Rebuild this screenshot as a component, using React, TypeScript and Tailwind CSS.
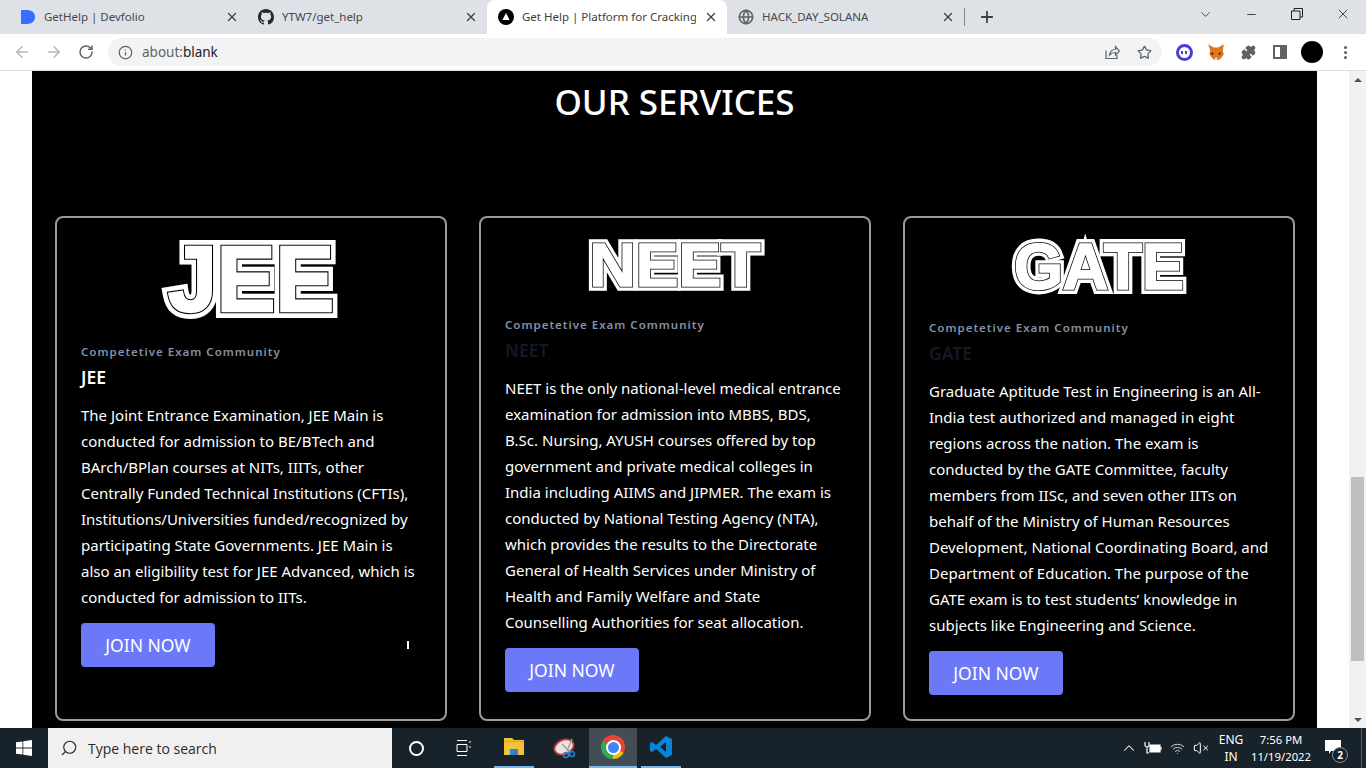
import type { ReactNode } from 'react';
import { ArrowLeft, ArrowRight, RotateCw, Info, Star, Puzzle, X, Plus, ChevronDown, Minus, Globe, EllipsisVertical, Search, ChevronUp, Wifi, VolumeX } from 'lucide-react';

const cards = [
  {
    logo: 'JEE',
    logoH: 80,
    logoClass: 'h-[80px]',
    titleClass: 'text-white',
    lines: [
      'The Joint Entrance Examination, JEE Main is',
      'conducted for admission to BE/BTech and',
      'BArch/BPlan courses at NITs, IIITs, other',
      'Centrally Funded Technical Institutions (CFTIs),',
      'Institutions/Universities funded/recognized by',
      'participating State Governments. JEE Main is',
      'also an eligibility test for JEE Advanced, which is',
      'conducted for admission to IITs.',
    ],
  },
  {
    logo: 'NEET',
    logoH: 53,
    logoClass: 'h-[53px]',
    titleClass: 'text-[#141a24]',
    lines: [
      'NEET is the only national-level medical entrance',
      'examination for admission into MBBS, BDS,',
      'B.Sc. Nursing, AYUSH courses offered by top',
      'government and private medical colleges in',
      'India including AIIMS and JIPMER. The exam is',
      'conducted by National Testing Agency (NTA),',
      'which provides the results to the Directorate',
      'General of Health Services under Ministry of',
      'Health and Family Welfare and State',
      'Counselling Authorities for seat allocation.',
    ],
  },
  {
    logo: 'GATE',
    logoH: 56,
    logoClass: 'h-[56px]',
    titleClass: 'text-[#141a24]',
    lines: [
      'Graduate Aptitude Test in Engineering is an All-',
      'India test authorized and managed in eight',
      'regions across the nation. The exam is',
      'conducted by the GATE Committee, faculty',
      'members from IISc, and seven other IITs on',
      'behalf of the Ministry of Human Resources',
      'Development, National Coordinating Board, and',
      'Department of Education. The purpose of the',
      'GATE exam is to test students’ knowledge in',
      'subjects like Engineering and Science.',
    ],
  },
];

// striped logo: same live text stacked with white / black / white strokes
function StripedLogo({ text, h, className }: { text: string; h: number; className: string }) {
  const w = 180;
  const k = h / 80;
  const outer = 14 * k;
  const layers = [
    { stroke: '#fff', width: outer },
    { stroke: '#000', width: 4.6 * k },
    { stroke: '#fff', width: 2.4 * k },
  ];
  return (
    <svg viewBox={`0 0 ${w} ${h}`} width={w} className={`${className} block mx-auto overflow-visible`}>
      {layers.map((l, i) => (
        <text
          key={i}
          x={outer / 2}
          y={h - outer / 2}
          textLength={w - outer}
          lengthAdjust="spacingAndGlyphs"
          fontFamily="'Liberation Sans', sans-serif"
          fontWeight="700"
          fontSize={(h - outer) / 0.716}
          fill="#fff"
          stroke={l.stroke}
          strokeWidth={l.width}
          strokeLinejoin="miter"
        >
          {text}
        </text>
      ))}
    </svg>
  );
}

function Tab({ title, active, icon, className }: { title: string; active?: boolean; icon: ReactNode; className: string }) {
  return (
    <div className={`${className} h-[34px] shrink-0 flex items-center gap-[8px] pr-[9px] text-[11.500px] ${active ? 'bg-white rounded-t-[8px] text-[#3c4043]' : 'text-[#45494e]'}`}>
      <span className="w-[16px] h-[16px] shrink-0 flex items-center justify-center">{icon}</span>
      <span className="flex-1 overflow-hidden whitespace-nowrap">{title}</span>
      <X size={14} strokeWidth={2.2} className="shrink-0 text-[#3c4043]" />
    </div>
  );
}

function ToolBox({ children }: { children: ReactNode }) {
  return <div className="w-[32px] h-[32px] shrink-0 flex items-center justify-center">{children}</div>;
}

function Chrome() {
  return (
    <div className="shrink-0 h-[71px] bg-white border-b border-[#dadce0]">
      <div className="h-[34px] bg-[#dee1e6] flex">
        <Tab
          className="w-[248px] pl-[20px]"
          title="GetHelp | Devfolio"
          icon={
            <svg viewBox="0 0 16 16" className="w-[16px] h-[16px]">
              <path d="M1 1h6c5 0 8 3 8 7s-3 7-8 7H1z" fill="#3770ff" />
            </svg>
          }
        />
        <Tab
          className="w-[239px] pl-[10px]"
          title="YTW7/get_help"
          icon={
            <svg viewBox="0 0 16 16" className="w-[16px] h-[16px]" fill="#24292f">
              <path d="M8 0C3.580 0 0 3.580 0 8c0 3.540 2.290 6.530 5.470 7.590.4.070.55-.17.55-.38 0-.19-.01-.82-.01-1.490-2.010.37-2.530-.49-2.690-.94-.09-.23-.48-.94-.82-1.130-.28-.15-.68-.52-.01-.53.63-.01 1.080.58 1.230.82.72 1.210 1.870.87 2.330.66.07-.52.28-.87.51-1.070-1.780-.2-3.640-.89-3.640-3.950 0-.87.31-1.590.82-2.150-.08-.2-.36-1.020.08-2.120 0 0 .67-.21 2.200.82.64-.18 1.320-.27 2-.27s1.360.09 2 .27c1.530-1.040 2.200-.82 2.200-.82.44 1.100.16 1.920.08 2.120.51.56.82 1.270.82 2.150 0 3.070-1.870 3.750-3.650 3.950.29.25.54.73.54 1.480 0 1.070-.01 1.930-.01 2.200 0 .21.15.46.55.38A8.010 8.010 0 0 0 16 8c0-4.420-3.580-8-8-8z" />
            </svg>
          }
        />
        <Tab
          active
          className="w-[240px] pl-[11px]"
          title="Get Help | Platform for Cracking"
          icon={
            <svg viewBox="0 0 16 16" className="w-[16px] h-[16px]">
              <circle cx="8" cy="8" r="8" fill="#000" />
              <path d="M8 4l3.600 7H4.400z" fill="#fff" />
            </svg>
          }
        />
        <Tab className="w-[237px] pl-[11px]" title="HACK_DAY_SOLANA" icon={<Globe size={16} strokeWidth={2.4} className="text-[#5f6368]" />} />
        <div className="w-px h-[18px] mt-[8px] bg-[#80868b]" />
        <div className="w-[44px] h-[34px] flex items-center justify-center">
          <Plus size={18} strokeWidth={2.4} className="text-[#3c4043]" />
        </div>
        <div className="ml-auto flex h-[28px]">
          <div className="w-[46px] flex items-center justify-center">
            <ChevronDown size={15} strokeWidth={1.5} className="text-[#3c4043]" />
          </div>
          <div className="w-[46px] flex items-center justify-center">
            <Minus size={13} strokeWidth={1.5} className="text-[#202124]" />
          </div>
          <div className="w-[46px] flex items-center justify-center">
            <svg viewBox="0 0 12 12" className="w-[12px] h-[12px]" fill="none" stroke="#202124">
              <path d="M3 3V.5h8.500V9H9M.5 3h8.500v8.500H.5z" />
            </svg>
          </div>
          <div className="w-[46px] flex items-center justify-center">
            <X size={16} strokeWidth={1.2} className="text-[#202124]" />
          </div>
        </div>
      </div>
      <div className="h-[36px] flex items-center pl-[6px]">
        <ToolBox>
          <ArrowLeft size={18} className="text-[#b4b7bb]" />
        </ToolBox>
        <ToolBox>
          <ArrowRight size={18} className="text-[#b4b7bb]" />
        </ToolBox>
        <ToolBox>
          <RotateCw size={16} strokeWidth={2.2} className="text-[#5f6368]" />
        </ToolBox>
        <div className="ml-[6px] w-[1054px] h-[28px] rounded-full bg-[#f1f3f4] flex items-center pl-[10px] text-[13.500px]">
          <Info size={15} strokeWidth={2} className="text-[#5f6368] mr-[9px]" />
          <span className="text-[#5f6368]">about:</span>
          <span className="text-[#202124]">blank</span>
          <div className="ml-auto flex items-center">
            <ToolBox>
              <svg viewBox="0 0 16 16" className="w-[16px] h-[16px]" fill="none" stroke="#5f6368" strokeWidth="1.200">
                <path d="M2 6.500V14.500h11V11" />
                <path d="M5.500 11c.5-3.500 3-5.500 6-5.500V2.500l4 4.500-4 4V8.500c-2.500 0-4.500.7-6 2.500z" />
              </svg>
            </ToolBox>
            <ToolBox>
              <Star size={15} strokeWidth={2} className="text-[#5f6368]" />
            </ToolBox>
            <div className="w-[2px]" />
          </div>
        </div>
        <div className="ml-[6px] flex items-center">
          <ToolBox>
            <div className="w-[17px] h-[17px] rounded-full bg-[#4a3dd9] flex items-center justify-center">
              <div className="w-[11px] h-[11px] rounded-full bg-white flex items-center justify-center gap-[2px]">
                <span className="w-[2px] h-[3px] bg-[#4a3dd9]" />
                <span className="w-[2px] h-[3px] bg-[#4a3dd9]" />
              </div>
            </div>
          </ToolBox>
          <ToolBox>
            <svg viewBox="0 0 16 16" className="w-[18px] h-[18px]">
              <path d="M1 1l5 3h4l5-3-1 6 1 3-3 4-2 1H7l-2-1-3-4 1-3z" fill="#e2761b" />
              <path d="M3 8l3 1-1 2zM13 8l-3 1 1 2z" fill="#233447" />
              <path d="M7 13h2v2H7z" fill="#f5e5d5" />
            </svg>
          </ToolBox>
          <ToolBox>
            <Puzzle size={15} fill="#5f6368" className="text-[#5f6368]" />
          </ToolBox>
          <ToolBox>
            <div className="w-[14px] h-[14px] border-2 border-[#5f6368] flex justify-end">
              <div className="w-[5px] h-full bg-[#5f6368]" />
            </div>
          </ToolBox>
          <ToolBox>
            <div className="w-[22px] h-[22px] rounded-full bg-black" />
          </ToolBox>
          <div className="w-[1px]" />
          <ToolBox>
            <EllipsisVertical size={17} strokeWidth={2.4} className="text-[#5f6368]" />
          </ToolBox>
        </div>
      </div>
    </div>
  );
}

function ServiceCard({ card }: { card: (typeof cards)[number] }) {
  return (
    <div className="w-[392px] shrink-0 rounded-[8px] border-2 border-[#9b9b9b] px-[24px] pt-[20px]">
      <StripedLogo text={card.logo} h={card.logoH} className={card.logoClass} />
      <p className="mt-[26px] h-[16px] text-[11.500px] leading-[16px] font-semibold tracking-[1px] text-[#8292aa]">Competetive Exam Community</p>
      <h3 className={`mt-[4px] h-[26px] text-[17.500px] leading-[26px] font-semibold ${card.titleClass}`}>{card.logo}</h3>
      <div className="mt-[12px] text-[15px] leading-[26px] text-white whitespace-nowrap">
        {card.lines.map((line) => (
          <div key={line}>{line}</div>
        ))}
      </div>
      <button className="mt-[13px] w-[134px] h-[44px] rounded-[4px] bg-[#6b78f8] text-[17.500px] text-white">JOIN NOW</button>
    </div>
  );
}

function TaskApp({ children, running, active, className = '' }: { children: ReactNode; running?: boolean; active?: boolean; className?: string }) {
  return (
    <div className={`${className} w-[48px] h-[40px] shrink-0 flex flex-col items-center ${active ? 'bg-[#454d54]' : ''}`}>
      <div className="flex-1 flex items-center justify-center">{children}</div>
      {running && <div className={`${active ? 'w-[48px]' : 'w-[40px]'} h-[2px] bg-[#76b9ed]`} />}
    </div>
  );
}

function Taskbar() {
  return (
    <div className="shrink-0 h-[40px] bg-[#17222b] flex items-center text-white">
      <div className="w-[48px] flex justify-center">
        <svg viewBox="0 0 16 16" className="w-[16px] h-[16px]" fill="#fff">
          <path d="M0 2.300l6.500-.9v6.200H0zM7.300 1.300L16 0v7.600H7.300zM0 8.400h6.500v6.200L0 13.700zM7.300 8.400H16V16l-8.700-1.300z" />
        </svg>
      </div>
      <div className="w-[344px] h-[40px] bg-[#f0f0f0] flex items-center pl-[12px] text-[14px] text-[#2b2b2b] font-['Open_Sans',sans-serif]">
        <Search size={18} strokeWidth={1.5} className="-scale-x-100 mr-[10px]" />
        Type here to search
      </div>
      <TaskApp>
        <div className="w-[15px] h-[15px] rounded-full border-2 border-white" />
      </TaskApp>
      <TaskApp>
        <svg viewBox="0 0 16 16" className="w-[16px] h-[16px]" fill="none" stroke="#fff">
          <path d="M1 .5h10M1 15.500h10M1 4.500h10v7H1zM14 1v2M14 6v2" />
        </svg>
      </TaskApp>
      <TaskApp running className="ml-[2px]">
        <svg viewBox="0 0 22 20" className="w-[22px] h-[20px]">
          <path d="M1 1h8l2 2h10v15H1z" fill="#f2c23c" />
          <path d="M7 12h8v6H7z" fill="#2a86c8" />
          <path d="M1 4h20v1H1z" fill="#d9a520" />
        </svg>
      </TaskApp>
      <TaskApp className="ml-[3px]">
        <svg viewBox="0 0 24 24" className="w-[24px] h-[24px]" fill="none">
          <ellipse cx="11" cy="11" rx="10" ry="7" transform="rotate(-25 11 11)" fill="#eee3e3" stroke="#c73c3c" strokeWidth="1.800" />
          <path d="M19 3L14 15M9 8l8 8" stroke="#9aa0a6" strokeWidth="1.500" />
          <circle cx="13" cy="19" r="2.500" stroke="#1e88d2" strokeWidth="1.500" />
          <circle cx="19" cy="18" r="2.500" stroke="#1e88d2" strokeWidth="1.500" />
        </svg>
      </TaskApp>
      <TaskApp running active>
        <div className="w-[24px] h-[24px] rounded-full bg-[conic-gradient(#ea4335_0_33%,#fbbc04_33%_50%,#34a853_50%_83%,#ea4335_83%)] flex items-center justify-center">
          <div className="w-[11px] h-[11px] rounded-full bg-[#4285f4] border-2 border-white box-content" />
        </div>
      </TaskApp>
      <TaskApp running>
        <svg viewBox="0 0 24 24" className="w-[24px] h-[24px]">
          <path d="M17 1l6 3v16l-6 3L7 14l-4 3-2-1V8l2-1 4 3zM17 7l-6 5 6 5z" fill="#0a84d6" fillRule="evenodd" />
        </svg>
      </TaskApp>
      <div className="ml-auto flex items-center h-[40px] text-[12px] leading-[17px] font-['Noto_Sans',sans-serif]">
        <div className="w-[24px] flex justify-center">
          <ChevronUp size={18} strokeWidth={1.4} />
        </div>
        <div className="w-[24px] flex justify-center">
          <svg viewBox="0 0 18 14" className="w-[18px] h-[14px]" fill="none" stroke="#fff" strokeWidth="1.200">
            <path d="M1 1v3c0 1 1 2 2 2s2-1 2-2V1M3 6v6h2" />
            <path d="M6 4h10v7H6z" fill="#fff" />
            <path d="M17 6v3" />
          </svg>
        </div>
        <div className="w-[25px] flex justify-center">
          <Wifi size={15} strokeWidth={1.6} className="text-[#c8ccd0]" />
        </div>
        <div className="w-[22px] flex justify-center">
          <VolumeX size={16} strokeWidth={1.500} />
        </div>
        <div className="w-[38px] text-center">
          ENG
          <br />
          IN
        </div>
        <div className="w-[62px] text-center text-[11.300px] whitespace-nowrap">
          7:56 PM
          <br />
          11/19/2022
        </div>
        <div className="relative w-[49px] h-[40px] flex items-center justify-center pr-[7px]">
          <svg viewBox="0 0 16 14" className="w-[16px] h-[14px] -mt-[3px] shrink-0" fill="#fff">
            <path d="M0 0h16v11H6l-2 3v-3H0z" />
          </svg>
          <div className="absolute left-[20px] top-[19px] w-[16px] h-[16px] rounded-full bg-[#17222b] border border-[#8a9096] text-[10px] leading-[14px] text-center font-bold">2</div>
        </div>
        <div className="w-px h-[40px] bg-[#56606a] mr-[4px]" />
      </div>
    </div>
  );
}

export default function App() {
  return (
    <div className="w-[1366px] h-[768px] overflow-hidden flex flex-col bg-white font-['Noto_Sans',sans-serif]">
      <Chrome />
      <div className="flex-1 flex min-h-0">
        <div className="w-[32px] bg-white" />
        <div className="relative w-[1285px] bg-black px-[23px]">
          <h2 className="pt-[8px] h-[145px] text-center text-[35px] leading-[46px] font-medium text-white">OUR SERVICES</h2>
          <div className="flex gap-[32px] h-[505px]">
            {cards.map((card) => (
              <ServiceCard key={card.logo} card={card} />
            ))}
          </div>
          {/* text cursor caught in the screenshot */}
          <div className="absolute left-[375px] top-[570px] w-[2px] h-[8px] bg-white" />
        </div>
        <div className="w-[32px] bg-white" />
        <div className="w-[17px] bg-[#f1f1f1] flex flex-col items-center">
          <div className="h-[17px] flex items-center justify-center">
            <svg viewBox="0 0 8 4" className="w-[8px] h-[4px]" fill="#505050">
              <path d="M4 0l4 4H0z" />
            </svg>
          </div>
          <div className="mt-[389px] w-[13px] h-[184px] bg-[#bfbfbf]" />
          <div className="mt-auto h-[17px] flex items-center justify-center">
            <svg viewBox="0 0 8 4" className="w-[8px] h-[4px]" fill="#505050">
              <path d="M4 4L0 0h8z" />
            </svg>
          </div>
        </div>
      </div>
      <Taskbar />
    </div>
  );
}
